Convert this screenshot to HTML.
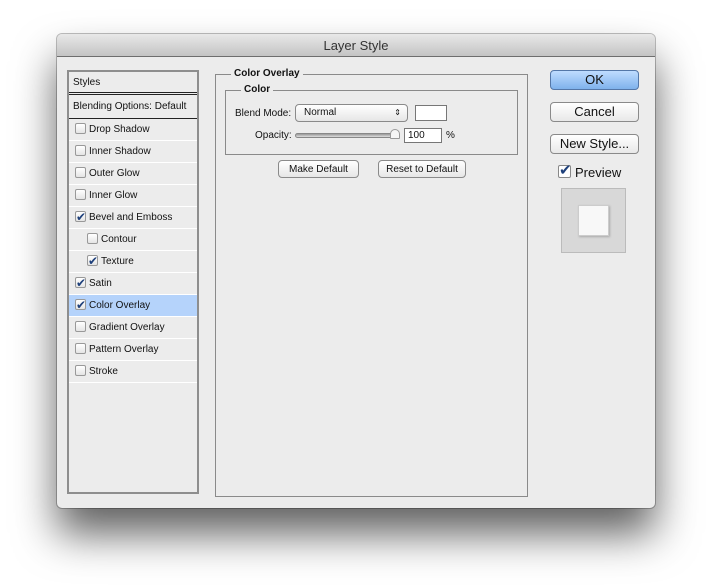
<!DOCTYPE html><html><head><style>
*{box-sizing:border-box;margin:0;padding:0}
body{width:712px;height:587px;background:#fff;position:relative;overflow:hidden;font-family:"Liberation Sans",sans-serif;font-size:11px;color:#111}
.win{position:absolute;left:57px;top:34px;width:598px;height:474px;background:#ececec;border-radius:5px;box-shadow:0 26px 42px rgba(0,0,0,.62),0 0 0 1px rgba(0,0,0,.25)}
.title{height:23px;border-radius:5px 5px 0 0;background:linear-gradient(#e8e8e8,#c4c4c4);border-bottom:1px solid #6e6e6e;text-align:center;font-size:13px;line-height:23px;color:#333}
.abs{position:absolute}
.list{left:10px;top:36px;width:132px;height:424px;border:2px solid #8e8e8e;background:#ececec}
.row{height:22px;border-bottom:1px solid #fff;line-height:21px;padding-left:20px;font-size:10px;position:relative}
.cb{position:absolute;left:6px;top:4px;width:11px;height:11px;border:1px solid #999;border-radius:2px;background:linear-gradient(#fff,#e4e4e4)}
.ck::after{content:"✔";position:absolute;left:0px;top:-5px;font-size:12px;color:#1d3f7a}
.ind{padding-left:32px}.ind .cb{left:18px}
.sel{background:#b5d3fb}
.fs{border:1px solid #8a8a8a}
.leg{position:absolute;background:#ececec;padding:0 3px;font-weight:bold;font-size:10px}
.btn{position:absolute;border:1px solid #8a8a8a;border-radius:4px;background:linear-gradient(#fff,#e6e6e6);text-align:center;font-size:10px}
.bb{position:absolute;left:493px;width:89px;height:20px;border:1px solid #8a8a8a;border-radius:4px;background:linear-gradient(#fff,#e8e8e8);text-align:center;font-size:13px;line-height:18px}
</style></head><body>
<div class="win">
<div class="title">Layer Style</div>
<div class="abs list">
<div class="row" style="padding-left:4px;height:23px;border-bottom:3px double #222;line-height:21px">Styles</div>
<div class="row" style="padding-left:4px;height:24px;border-bottom:1px solid #222;line-height:23px">Blending Options: Default</div>
<div class="row"><span class="cb"></span>Drop Shadow</div>
<div class="row"><span class="cb"></span>Inner Shadow</div>
<div class="row"><span class="cb"></span>Outer Glow</div>
<div class="row"><span class="cb"></span>Inner Glow</div>
<div class="row"><span class="cb ck"></span>Bevel and Emboss</div>
<div class="row ind"><span class="cb"></span>Contour</div>
<div class="row ind"><span class="cb ck"></span>Texture</div>
<div class="row"><span class="cb ck"></span>Satin</div>
<div class="row sel"><span class="cb ck"></span>Color Overlay</div>
<div class="row"><span class="cb"></span>Gradient Overlay</div>
<div class="row"><span class="cb"></span>Pattern Overlay</div>
<div class="row"><span class="cb"></span>Stroke</div>
</div>
<div class="abs fs" style="left:158px;top:40px;width:313px;height:423px"></div>
<div class="leg" style="left:174px;top:34px">Color Overlay</div>
<div class="abs fs" style="left:168px;top:56px;width:293px;height:65px"></div>
<div class="leg" style="left:184px;top:50px">Color</div>
<div class="abs" style="left:178px;top:74px;font-size:10px">Blend Mode:</div>
<div class="btn" style="left:238px;top:70px;width:113px;height:18px;text-align:left;padding-left:8px;line-height:16px">Normal<span style="position:absolute;right:6px;top:0px;font-size:8px">⇕</span></div>
<div class="abs" style="left:358px;top:71px;width:32px;height:16px;border:1px solid #777;background:#fff"></div>
<div class="abs" style="left:198px;top:96px;font-size:10px">Opacity:</div>
<div class="abs" style="left:238px;top:99px;width:104px;height:5px;border-radius:3px;background:linear-gradient(#999,#ddd);border:1px solid #888"></div>
<div class="abs" style="left:333px;top:95px;width:10px;height:10px;background:#f6f6f6;border:1px solid #999;border-radius:5px 5px 1px 1px"></div>
<div class="abs" style="left:347px;top:94px;width:38px;height:15px;border:1px solid #777;background:#fff;padding-left:3px;font-size:10px;line-height:13px">100</div>
<div class="abs" style="left:389px;top:96px;font-size:10px">%</div>
<div class="btn" style="left:221px;top:126px;width:81px;height:18px;line-height:18px">Make Default</div>
<div class="btn" style="left:321px;top:126px;width:88px;height:18px;line-height:18px">Reset to Default</div>
<div class="bb" style="top:36px;background:linear-gradient(#bfdcff,#7fb2ec);border-color:#5477a8">OK</div>
<div class="bb" style="top:68px">Cancel</div>
<div class="bb" style="top:100px">New Style...</div>
<div class="abs" style="left:501px;top:131px;width:13px;height:13px;border:1px solid #888;border-radius:2px;background:#fff"><span style="position:absolute;left:0;top:-5px;font-size:15px;color:#1d3f7a">✔</span></div>
<div class="abs" style="left:518px;top:131px;font-size:13px">Preview</div>
<div class="abs" style="left:504px;top:154px;width:65px;height:65px;background:#d8d8d8;border:1px solid #bbb"><div style="position:absolute;left:16px;top:16px;width:31px;height:31px;background:#f8f8f8;border:1px solid #ccc;box-shadow:1px 1px 2px #aaa"></div></div>
</div>
</body></html>
